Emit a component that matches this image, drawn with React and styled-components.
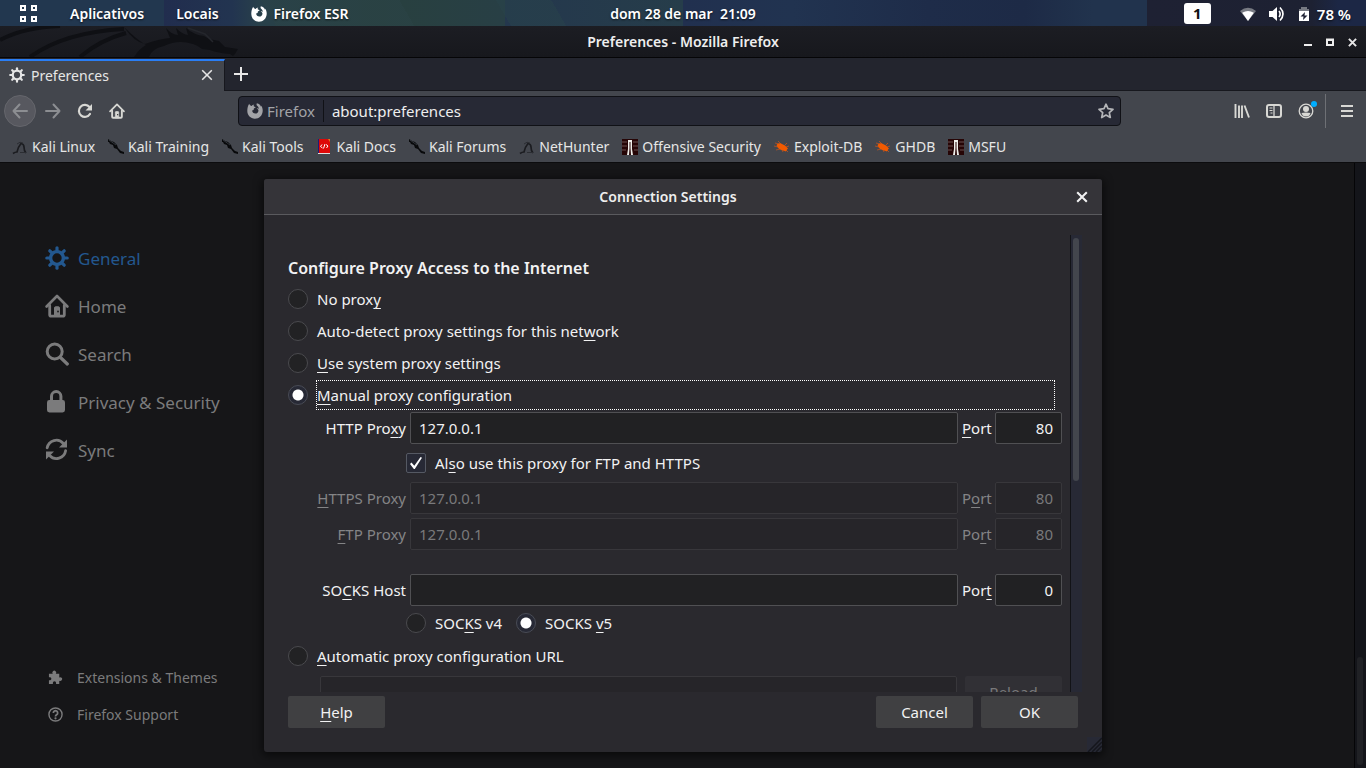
import React from 'react';
import styled, { createGlobalStyle, css } from 'styled-components';

const GlobalStyle = createGlobalStyle`
  *, *::before, *::after { box-sizing: border-box; }
  body { margin: 0; background: #161618; }
  body, button, input { font-family: "Noto Sans", "Open Sans", sans-serif; font-size: 15px; }
  button { padding: 0; border: 0; background: none; color: inherit; }
  a { color: inherit; text-decoration: none; }
  svg { display: block; flex: none; }
`;

const Desktop = styled.div`
  display: flex;
  flex-direction: column;
  height: 100vh;
  overflow: hidden;
  color: #e6e6e6;
`;

/* ---- desktop panel ---- */
const Panel = styled.header`
  display: grid;
  grid-template-columns: 1fr auto 1fr;
  align-items: center;
  flex: none;
  height: 26px;
  padding-top: 1px;
  color: #fff;
  font-size: 14px;
  font-weight: 600;
  text-shadow: 0 1px 2px #000a;
  background:
    linear-gradient(90deg, transparent 84%, #1e2133 84%, #1d2132 96%, #1c2745 98%),
    linear-gradient(60deg, transparent 37%, #28434a80 37%, #28434a80 41%, transparent 41%),
    linear-gradient(60deg, transparent 20%, #2b434780 20%, #2b434780 30%, transparent 30%),
    linear-gradient(90deg, #22374f 0%, #22374f 12%, #212d4e 12%, #223450 17%, #28404a 19%, #28403f 28%, #283f45 37%, #24374d 37%, #263d4a 50%, #21304f 50%, #213350 58%, #1e2c49 68%, #1d2a46 75%, #21334d 80%);
`;

const PanelGroup = styled.div`
  display: flex;
  align-items: center;
  justify-content: ${(p) => (p.$end ? 'flex-end' : 'flex-start')};
  gap: ${(p) => (p.$end ? 13 : 32)}px;
  padding: ${(p) => (p.$end ? '0 15px 0 0' : '0 0 0 20px')};
`;

const PanelButton = styled.button`
  display: flex;
  align-items: center;
  gap: 7px;
  font-size: ${(p) => (p.$large ? 15 : 14)}px;
  font-weight: 600;
  line-height: 20px;
  text-shadow: inherit;
  white-space: pre;
`;

const Workspace = styled.button`
  width: 27px;
  height: 21px;
  margin-right: 16px;
  border-radius: 3px;
  background: #fff;
  color: #111;
  font-size: 15px;
  font-weight: 700;
  line-height: 21px;
`;

/* ---- window chrome ---- */
const TitleBar = styled.div`
  position: relative;
  display: grid;
  grid-template-columns: 1fr auto 1fr;
  align-items: center;
  flex: none;
  height: 32px;
  padding-top: 1px;
  border-bottom: 1px solid #050507;
  background: linear-gradient(#1c1d23, #17181d);
`;

const TitleText = styled.h1`
  margin: 0;
  font-size: 14px;
  font-weight: 600;
  line-height: 20px;
  color: #eee;
`;

const WindowButtons = styled.div`
  display: flex;
  justify-content: flex-end;
  gap: 6px;
  padding-right: 6px;
  button { display: grid; place-items: center; width: 16px; height: 20px; }
`;

const TabStrip = styled.div`
  display: flex;
  flex: none;
  height: 33px;
  border-bottom: 1px solid #17181e;
  background: #23252e;
`;

const Tab = styled.div`
  display: flex;
  align-items: center;
  gap: 6px;
  width: 225px;
  height: 32px;
  margin-top: 1px;
  padding: 0 11px 2px 9px;
  border-top: 2px solid #2a7ef5;
  border-right: 1px solid #17181e;
  background: #43464d;
  font-size: 14px;
  span { flex: 1; }
`;

const NewTab = styled.button`
  display: grid;
  place-items: center;
  width: 32px;
`;

const NavBar = styled.nav`
  display: flex;
  align-items: center;
  flex: none;
  height: 40px;
  padding: 0 3px 0 4px;
  background: #43464d;
`;

const NavButton = styled.button`
  position: relative;
  display: grid;
  place-items: center;
  flex: none;
  width: 32px;
  height: 32px;
  border-radius: 50%;
  color: ${(p) => (p.$dim ? '#8c8e92' : '#d8d8d4')};
  ${(p) => p.$round && css`
    margin-right: 1px;
    background: #57585f;
    border: 1px solid #65666c;
  `}
`;

const Separator = styled.span`
  width: 1px;
  height: 34px;
  margin: 0 5px 0 3px;
  background: #6e7075;
`;

const Badge = styled.span`
  position: absolute;
  top: 6px;
  right: 5px;
  width: 6px;
  height: 6px;
  border-radius: 50%;
  background: #00aeff;
`;

const UrlBar = styled.div`
  display: flex;
  align-items: center;
  flex: 1;
  height: 30px;
  margin: 0 105px;
  padding: 0 6px 0 8px;
  border: 1px solid #101116;
  border-radius: 4px;
  background: #272935;
`;

const Identity = styled.span`
  display: flex;
  align-items: center;
  gap: 4px;
  height: 22px;
  padding-right: 8px;
  border-right: 1px solid #101116;
  color: #a2a3a7;
`;

const UrlInput = styled.input`
  flex: 1;
  min-width: 0;
  padding: 0 8px;
  border: 0;
  outline: 0;
  background: none;
  color: #eee;
`;

const Bookmarks = styled.div`
  display: flex;
  align-items: center;
  gap: 13px;
  flex: none;
  height: 32px;
  padding-left: 12px;
  border-bottom: 1px solid #0c0c0e;
  background: #43464d;
`;

const Bookmark = styled.a`
  display: flex;
  align-items: center;
  gap: 4px;
  font-size: 14px;
  line-height: 20px;
  white-space: nowrap;
`;

/* ---- preferences page ---- */
const Page = styled.main`
  position: relative;
  display: flex;
  flex: 1;
  min-height: 0;
  background: #161618;
`;

const Sidebar = styled.aside`
  display: flex;
  flex-direction: column;
  justify-content: space-between;
  flex: 1;
  padding: 71px 0 35px 45px;
  color: #7b7b7c;
`;

const SideList = styled.nav`
  display: flex;
  flex-direction: column;
`;

const SideLink = styled.a`
  display: flex;
  align-items: center;
  gap: 9px;
  height: 48px;
  font-size: 17px;
  color: ${(p) => (p.$active ? '#23588f' : 'inherit')};
`;

const SideFooterLink = styled.a`
  display: flex;
  align-items: center;
  gap: 14px;
  height: 37px;
  padding-left: 3px;
  font-size: 14px;
`;

const PageScroll = styled.div`
  display: flex;
  flex-direction: column;
  justify-content: flex-end;
  width: 12px;
  padding: 0 2px 3px;
  border-left: 1px solid #050507;
  background: #14151a;
`;

const PageThumb = styled.div`
  width: 6px;
  height: 108px;
  border-radius: 3px;
  background: #202125;
`;

const Overlay = styled.div`
  position: absolute;
  inset: 0;
  display: flex;
  justify-content: center;
  padding: 16px;
`;

const Dialog = styled.section`
  display: flex;
  flex-direction: column;
  width: 838px;
  max-width: 100%;
  border-radius: 3px;
  overflow: hidden;
  position: relative;
  background: #2a292e;
  box-shadow: 0 2px 8px 2px #0008;
  color: #f2f2f3;
`;

const DialogHeader = styled.header`
  display: grid;
  grid-template-columns: 10px 1fr 40px;
  align-items: center;
  flex: none;
  height: 36px;
  border-bottom: 1px solid #5a5a5e;
  background: #353439;
  text-align: center;
  button { display: grid; place-items: center; height: 35px; }
`;

const DialogBody = styled.form`
  display: flex;
  flex-direction: column;
  gap: 4px;
  flex: 1;
  min-height: 0;
  padding: 20px 20px 24px 24px;
`;

const ScrollArea = styled.div`
  display: flex;
  flex: 1;
  min-height: 0;
`;

const Settings = styled.div`
  flex: 1;
  padding: 18px 8px 0 0;
  overflow: hidden;
`;

const Track = styled.div`
  width: 12px;
  padding: 3px 2px;
  border-left: 1px solid #121317;
  background: #272935;
`;

const Thumb = styled.div`
  width: 6px;
  height: 243px;
  border-radius: 3px;
  background: #43464d;
`;

const SectionTitle = styled.h2`
  margin: 0;
  font-size: 16px;
  font-weight: 600;
  line-height: 30px;
`;

const Mnemonic = styled.u`
  text-decoration-thickness: 1px;
  text-underline-offset: 3px;
`;

const Choice = styled.div`
  display: flex;
  align-items: center;
  height: 32px;
`;

const ChoiceLabel = styled.label`
  height: 30px;
  border: 1px dotted ${(p) => (p.$focused ? '#fff' : 'transparent')};
  line-height: 28px;
  margin: 0 7px 0 8px;
  ${(p) => p.$wide && 'flex: 1;'}
`;

const Radio = styled.input.attrs({ type: 'radio' })`
  appearance: none;
  width: 20px;
  height: 20px;
  margin: 0;
  border: 1px solid #4a4a4e;
  border-radius: 50%;
  background: #222224;
  &:checked {
    border-color: #484b55;
    background: radial-gradient(circle, #fff 5px, #272935 6px);
  }
`;

const Checkbox = styled.input.attrs({ type: 'checkbox' })`
  appearance: none;
  display: grid;
  place-items: center;
  width: 20px;
  height: 20px;
  margin: 0;
  border: 1px solid #555963;
  border-radius: 2px;
  background: #272935;
  &:checked::before {
    content: '';
    width: 12px;
    height: 12px;
    background: #fff;
    clip-path: polygon(0 58%, 12% 46%, 36% 72%, 88% 0, 100% 6%, 40% 100%, 32% 100%);
  }
`;

const Indented = styled.div`
  display: flex;
  align-items: center;
  height: ${(p) => (p.$tall ? 38 : 34)}px;
  padding-left: 118px;
  label { margin-right: 13px; }
`;

const ProxyRow = styled.div`
  display: grid;
  grid-template-columns: 118px 1fr 29px 67px;
  align-items: center;
  gap: 4px;
  margin-top: ${(p) => p.$gap}px;
  color: ${(p) => (p.$off ? '#848486' : 'inherit')};
  label { white-space: nowrap; }
  label:first-child { text-align: right; }
`;

const Field = styled.input`
  min-width: 0;
  width: 100%;
  height: 32px;
  padding: 0 8px;
  border: 1px solid #505053;
  border-radius: 2px;
  background: #212123;
  color: #f2f2f3;
  text-align: ${(p) => (p.$right ? 'right' : 'left')};
  &:disabled {
    border-color: #38373b;
    background: #262529;
    color: #79797b;
  }
`;

const AutoRow = styled.div`
  display: flex;
  gap: 8px;
  margin-top: 4px;
  padding-left: 32px;
`;

const Button = styled.button`
  flex: none;
  width: 97px;
  height: 32px;
  border-radius: 2px;
  background: #404042;
  color: #f2f2f3;
  &:disabled { background: #313035; color: #79797b; }
`;

const Actions = styled.footer`
  display: flex;
  gap: 8px;
  padding-right: 4px;
  button:first-child { margin-right: auto; }
`;

const Grip = styled.svg`
  position: absolute;
  right: 0;
  bottom: 0;
`;

/* ---- drawings ---- */
const Gear = ({ size }) => (
  <svg width={size} height={size} viewBox="0 0 24 24" fill="none" stroke="currentColor">
    <circle cx="12" cy="12" r="6.4" strokeWidth="3.4" />
    {[0, 45, 90, 135, 180, 225, 270, 315].map((a) => (
      <path key={a} d="M12 4.5V1.8" strokeWidth="3.2" strokeLinecap="round" transform={`rotate(${a} 12 12)`} />
    ))}
  </svg>
);

const House = ({ size }) => (
  <svg width={size} height={size} viewBox="0 0 24 24" fill="none" stroke="currentColor" strokeLinecap="round" strokeLinejoin="round">
    <path d="M1.6 12.5 12 2l10.4 10.5" strokeWidth="2.6" />
    <path d="M4.7 11.5v9.3q0 1.4 1.4 1.4h11.8q1.4 0 1.4-1.4v-9.3" strokeWidth="2.8" />
    <path d="M9.500 22v-8.2q0-1 1-1h3q1 0 1 1V22z" strokeWidth="1" fill="currentColor" />
    <circle cx="13" cy="17.500" r="1" fill="#222" stroke="none" />
  </svg>
);

const Magnifier = () => (
  <svg width="24" height="24" viewBox="0 0 24 24" fill="none" stroke="currentColor" strokeLinecap="round">
    <circle cx="9.7" cy="9.5" r="7.5" strokeWidth="3" />
    <path d="M15.5 15.5 22.3 22" strokeWidth="3.2" />
  </svg>
);

const Padlock = () => (
  <svg width="24" height="24" viewBox="0 0 24 24" fill="none" stroke="currentColor">
    <path d="M6.5 12V6.3a4.7 4.7 0 0 1 9.4 0V12" strokeWidth="3" />
    <rect x="2" y="10" width="18" height="12.5" rx="2.4" fill="currentColor" stroke="none" />
  </svg>
);

const SyncIcon = () => (
  <svg width="24" height="24" viewBox="0 0 24 24" fill="none" stroke="currentColor">
    <path d="M2.200 9.800A9.300 9.300 0 0 1 18.400 5.500M20.600 12.700A9.300 9.300 0 0 1 4.600 17.500" strokeWidth="2.8" strokeLinecap="round" />
    <path d="M22 1.500v8h-8zM1 21.500v-8h8z" fill="currentColor" stroke="none" />
  </svg>
);

const Puzzle = () => (
  <svg width="15" height="15" viewBox="0 0 16 16" fill="currentColor">
    <path d="M1 4h4.2a2 2 0 1 1 3 0H12v4a2 2 0 1 1 0 3.400V15H8.600v-1.300a1.700 1.700 0 0 0-3.400 0V15H1v-4h1.300a1.700 1.700 0 0 0 0-3.300H1z" />
  </svg>
);

const Question = () => (
  <svg width="15" height="15" viewBox="0 0 16 16" fill="none" stroke="currentColor">
    <circle cx="8" cy="8" r="7" strokeWidth="1.500" />
    <path d="M5.700 6.300a2.300 2.300 0 1 1 3.500 2Q8 9 8 10" strokeWidth="1.900" />
    <circle cx="8" cy="12" r="1.200" fill="currentColor" stroke="none" />
  </svg>
);

const FirefoxMark = () => (
  <svg width="16" height="16" viewBox="0 0 16 16" fill="currentColor">
    <path d="M2.200.800c.600 1.500 1.300 2 2.500 2.100C5.500 2 6.200 1.600 7.200 1.500c-.6.7-.7 1.500-.2 2.100l1.800.6-1.900 1.300-.3 1.400-1.500.6c.2 1.900 1.500 3 3.200 3 2 0 3.300-1.500 3.100-3.200-.1-1-.8-1.600-1.700-1.900 1-.3 1.700 0 2.200.5-.3-2-1.500-2.800-2.400-3.900L9.800.300c2.400.6 3.600 1.900 4.200 3.400l.3-1c1 1.500 1.500 3.200 1.400 5.300-.2 4.500-3.500 7.700-7.800 7.700S.3 12.500.3 8.100c0-2.900.6-5.500 1.900-7.300z" />
  </svg>
);

const Cross = ({ size, weight }) => (
  <svg width={size} height={size} viewBox="0 0 10 10" stroke="currentColor" strokeWidth={weight}>
    <path d="M1 1l8 8M9 1l-8 8" />
  </svg>
);

const AppGrid = () => (
  <svg width="18" height="18" viewBox="0 0 18 18" fill="none" stroke="#fff" strokeWidth="2">
    <path d="M1 1h4v4H1zM12 1h4v4h-4zM1 12h4v4H1zM12 12h4v4h-4z" />
  </svg>
);

const Wifi = () => (
  <svg width="16" height="16" viewBox="0 0 16 16">
    <path d="M0 5Q8-1.500 16 5l-8 10z" fill="#777a82" />
    <path d="M2.200 6.800Q8 3 13.800 6.800L8 15z" fill="#fff" />
  </svg>
);

const Speaker = () => (
  <svg width="16" height="16" viewBox="0 0 16 16" fill="none" stroke="#fff" strokeWidth="1.600">
    <path d="M0 5h3.500L8 1v14L3.500 11H0z" fill="#fff" stroke="none" />
    <path d="M10 5q2.300 3 0 6M11 1.500q6 6.500 0 13" />
  </svg>
);

const Battery = () => (
  <svg width="12" height="16" viewBox="0 0 12 16">
    <path d="M3 1h6v2h2v3H1V3h2z" fill="#777a82" />
    <path d="M1 5h10v10H1z" fill="#fff" />
    <path d="M7 6 2.500 10.500H5.500L5 14 9.500 9.500h-3z" fill="#1d2132" />
  </svg>
);

const Dragon = styled.svg`
  position: absolute;
  left: 0;
  top: 0;
`;

const TitleDragon = () => (
  <Dragon width="245" height="31" viewBox="0 0 245 31" fill="none" stroke="#0f1014">
    <path d="M0 14Q25 1 60 0M30 31Q65 6 124 3M80 31Q100 14 126 7" strokeWidth="4" />
    <path d="M124 1q10 15 21 17 14-5 25-6l-4-10q6 7 12 7l-2-7q7 7 12 7l-2-7q8 7 18 8l5 3 10 2 6 6 13 2-3 5-2 2-3-2q-12-1-20-4l-8-1q-5-4-9-5-15-5-29 2-13 3-15 11h-15q6-9 12-12-10-6-22-18z" fill="#0f1014" stroke="none" />
    <path d="M188 2l17 6 8 8" strokeWidth="1.500" stroke="#24262c" />
  </Dragon>
);

const SiteIcon = ({ kind }) => {
  if (kind === 'linux') {
    return (
      <svg width="16" height="16" viewBox="0 0 16 16" fill="none" stroke="#1b1c20">
        <path d="M1 14.500q2-1.500 4-1.500Q6 8 9 4.500q3 .5 3 3.500 0 4 2 6" strokeWidth="1.700" />
        <path d="M5 5q3-3 6-1M8 13.500h6" stroke="#2b2d32" />
      </svg>
    );
  }
  if (kind === 'kali') {
    return (
      <svg width="16" height="16" viewBox="0 0 16 16" fill="#08090b">
        <path d="M0 0l3 2 3 1 3 3 1 3 3 3 3 1v2l-4-1-3-4-3-1-1-3-3-1-1-2H0z" />
        <path d="M1 1l7 5" stroke="#30343a" fill="none" />
      </svg>
    );
  }
  if (kind === 'docs') {
    return (
      <svg width="16" height="16" viewBox="0 0 16 16">
        <path d="M2 0h12v14H2z" fill="#dd0808" />
        <path d="M2 0h1v14H2z" fill="#231a77" />
        <path d="M12 0h2v3z" fill="#d87a20" />
        <path d="M2 14h12v1H2z" fill="#ddd" />
        <path d="M6 5.500 4.500 7.500 6.500 9M9 5 7.500 9.500M10 5.500l2 1.500-1.500 2" stroke="#fff" fill="none" />
      </svg>
    );
  }
  if (kind === 'offsec') {
    return (
      <svg width="16" height="16" viewBox="0 0 16 16">
        <path d="M0 0h16v16H0z" fill="#260506" />
        <path d="M0 3h5M11 3h5M0 7h5M11 7h5M0 11h4M12 11h4" stroke="#69504e" />
        <path d="M5 16l1-6V1h4v9l1 6H9L8.500 9V3h-1v6L7 16z" fill="#efeeea" />
      </svg>
    );
  }
  return (
    <svg width="16" height="16" viewBox="0 0 16 16">
      <path d="M1 4l4 1M0 7l4 1M2 11l4-1M4 2l3 3M12 8l3-1M11 10l3 3M8 11l1 2M11 6l2-2" stroke="#a4502a" />
      <path d="M2.500 6Q4 3.500 7 4.500l4 2 3 3-1 1-1 2-3-1Q4 10.500 2.500 6z" fill="#f15a00" />
    </svg>
  );
};

const BOOKMARKS = [
  ['linux', 'Kali Linux'],
  ['kali', 'Kali Training'],
  ['kali', 'Kali Tools'],
  ['docs', 'Kali Docs'],
  ['kali', 'Kali Forums'],
  ['linux', 'NetHunter'],
  ['offsec', 'Offensive Security'],
  ['bug', 'Exploit-DB'],
  ['bug', 'GHDB'],
  ['offsec', 'MSFU'],
];

const CATEGORIES = [
  ['General', <Gear size={24} />],
  ['Home', <House size={24} />],
  ['Search', <Magnifier />],
  ['Privacy & Security', <Padlock />],
  ['Sync', <SyncIcon />],
];

/* Label text whose access key, marked by an underscore before it, is underlined. */
const Keyed = ({ text }) => {
  const at = text.indexOf('_');
  return (
    <>
      {text.slice(0, at)}
      <Mnemonic>{text[at + 1]}</Mnemonic>
      {text.slice(at + 2)}
    </>
  );
};

const ProxyChoice = ({ id, text, checked, focused }) => (
  <Choice>
    <Radio id={id} name="proxy" defaultChecked={checked} />
    <ChoiceLabel htmlFor={id} $wide $focused={focused}><Keyed text={text} /></ChoiceLabel>
  </Choice>
);

const ProxyHost = ({ id, label, portLabel, host, port, disabled, gap }) => (
  <ProxyRow $off={disabled} $gap={gap}>
    <label htmlFor={id}><Keyed text={label} /></label>
    <Field id={id} defaultValue={host} disabled={disabled} />
    <label htmlFor={`${id}-port`}><Keyed text={portLabel} /></label>
    <Field id={`${id}-port`} defaultValue={port} disabled={disabled} $right />
  </ProxyRow>
);

export default function App() {
  return (
    <Desktop>
      <GlobalStyle />
      <Panel>
        <PanelGroup>
          <PanelButton aria-label="Overview"><AppGrid /></PanelButton>
          <PanelButton>Aplicativos</PanelButton>
          <PanelButton>Locais</PanelButton>
          <PanelButton><FirefoxMark />Firefox ESR</PanelButton>
        </PanelGroup>
        <PanelButton>dom 28 de mar  21:09</PanelButton>
        <PanelGroup $end>
          <Workspace>1</Workspace>
          <Wifi />
          <Speaker />
          <PanelButton $large><Battery />78 %</PanelButton>
        </PanelGroup>
      </Panel>

      <TitleBar>
        <TitleDragon />
        <span />
        <TitleText>Preferences - Mozilla Firefox</TitleText>
        <WindowButtons>
          <button aria-label="Minimize">
            <svg width="8" height="8" viewBox="0 0 8 8"><path d="M0 6h8v2H0z" fill="#eee" /></svg>
          </button>
          <button aria-label="Maximize">
            <svg width="8" height="8" viewBox="0 0 8 8" fill="none" stroke="#eee"><path d="M1 1.500h6v5.500H1z" strokeWidth="2" /><path d="M0 2h8" strokeWidth="2" /></svg>
          </button>
          <button aria-label="Close"><Cross size={9} weight={2.2} /></button>
        </WindowButtons>
      </TitleBar>

      <TabStrip>
        <Tab>
          <Gear size={16} />
          <span>Preferences</span>
          <button aria-label="Close tab"><Cross size={12} weight={1.3} /></button>
        </Tab>
        <NewTab aria-label="New tab">
          <svg width="14" height="14" viewBox="0 0 14 14" stroke="#e8e8e8" strokeWidth="2"><path d="M7 0v14M0 7h14" /></svg>
        </NewTab>
      </TabStrip>

      <NavBar>
        <NavButton $round $dim aria-label="Back">
          <svg width="16" height="16" viewBox="0 0 16 16" fill="none" stroke="currentColor" strokeWidth="2" strokeLinecap="round" strokeLinejoin="round"><path d="M15 8H1.500M7.500 1.500 1.500 8l6 6.500" /></svg>
        </NavButton>
        <NavButton $dim aria-label="Forward">
          <svg width="16" height="16" viewBox="0 0 16 16" fill="none" stroke="currentColor" strokeWidth="2" strokeLinecap="round" strokeLinejoin="round"><path d="M1 8h13.500M8.500 1.500l6 6.500-6 6.500" /></svg>
        </NavButton>
        <NavButton aria-label="Reload page">
          <svg width="16" height="16" viewBox="0 0 16 16" fill="none" stroke="currentColor" strokeWidth="2.200"><path d="M12.500 4A6 6 0 1 0 13 11" strokeLinecap="round" /><path d="M15 1v6.500H8.500z" fill="currentColor" stroke="none" /></svg>
        </NavButton>
        <NavButton aria-label="Home page"><House size={16} /></NavButton>
        <UrlBar>
          <Identity><FirefoxMark />Firefox</Identity>
          <UrlInput aria-label="Address" defaultValue="about:preferences" />
          <svg width="16" height="16" viewBox="0 0 16 16" fill="none" stroke="#b4b5b8" strokeWidth="1.700" strokeLinejoin="round"><path d="M8 1.200l2 4.500 5 .6-3.700 3.300 1 4.900L8 12l-4.300 2.500 1-4.900L1 6.300l5-.6z" /></svg>
        </UrlBar>
        <NavButton aria-label="Library">
          <svg width="16" height="16" viewBox="0 0 16 16" fill="none" stroke="currentColor" strokeWidth="1.900"><path d="M1.500 1v14M5 2.500V15M8 2.500V15M10.500 2.500 15 14.500" /></svg>
        </NavButton>
        <NavButton aria-label="Sidebars">
          <svg width="16" height="16" viewBox="0 0 16 16" fill="none" stroke="currentColor"><rect x="1" y="2" width="14" height="12" rx="2" strokeWidth="2" /><path d="M8 2v12" strokeWidth="1.300" /><path d="M3.500 5h3M3.500 7.500h3M4.500 10h2" /></svg>
        </NavButton>
        <NavButton aria-label="Account">
          <svg width="16" height="16" viewBox="0 0 16 16" fill="currentColor"><circle cx="8" cy="8" r="6.800" fill="none" stroke="currentColor" strokeWidth="1.300" /><circle cx="8" cy="6" r="3" /><path d="M3.500 10q4.500-1 9 0-1 3.500-4.500 3.500T3.500 10z" /></svg>
          <Badge />
        </NavButton>
        <Separator />
        <NavButton aria-label="Menu">
          <svg width="14" height="14" viewBox="0 0 14 14" stroke="currentColor" strokeWidth="2"><path d="M1 2h12M1 7h12M1 12h12" /></svg>
        </NavButton>
      </NavBar>

      <Bookmarks>
        {BOOKMARKS.map(([kind, name]) => (
          <Bookmark key={name} href="#"><SiteIcon kind={kind} />{name}</Bookmark>
        ))}
      </Bookmarks>

      <Page>
        <Sidebar>
          <SideList>
            {CATEGORIES.map(([name, icon], i) => (
              <SideLink key={name} href="#" $active={i === 0}>{icon}{name}</SideLink>
            ))}
          </SideList>
          <SideList>
            <SideFooterLink href="#"><Puzzle />Extensions &amp; Themes</SideFooterLink>
            <SideFooterLink href="#"><Question />Firefox Support</SideFooterLink>
          </SideList>
        </Sidebar>
        <PageScroll><PageThumb /></PageScroll>

        <Overlay>
          <Dialog role="dialog" aria-label="Connection Settings">
            <DialogHeader>
              <span />
              <TitleText as="h2">Connection Settings</TitleText>
              <button aria-label="Close dialog"><Cross size={12} weight={1.7} /></button>
            </DialogHeader>
            <DialogBody onSubmit={(e) => e.preventDefault()}>
              <ScrollArea>
                <Settings>
                  <SectionTitle>Configure Proxy Access to the Internet</SectionTitle>
                  <ProxyChoice id="none" text="No prox_y" />
                  <ProxyChoice id="detect" text="Auto-detect proxy settings for this net_work" />
                  <ProxyChoice id="system" text="_Use system proxy settings" />
                  <ProxyChoice id="manual" text="_Manual proxy configuration" checked focused />
                  <ProxyHost id="http" label="HTTP Pro_xy" portLabel="_Port" host="127.0.0.1" port="80" gap={1} />
                  <Indented $tall>
                    <Checkbox id="share" defaultChecked />
                    <ChoiceLabel htmlFor="share"><Keyed text="Al_so use this proxy for FTP and HTTPS" /></ChoiceLabel>
                  </Indented>
                  <ProxyHost id="https" label="_HTTPS Proxy" portLabel="P_ort" host="127.0.0.1" port="80" gap={0} disabled />
                  <ProxyHost id="ftp" label="_FTP Proxy" portLabel="Po_rt" host="127.0.0.1" port="80" gap={4} disabled />
                  <ProxyHost id="socks" label="SO_CKS Host" portLabel="Por_t" host="" port="0" gap={24} />
                  <Indented>
                    <Radio id="v4" name="socks" />
                    <ChoiceLabel htmlFor="v4"><Keyed text="SOC_KS v4" /></ChoiceLabel>
                    <Radio id="v5" name="socks" defaultChecked />
                    <ChoiceLabel htmlFor="v5"><Keyed text="SOCKS _v5" /></ChoiceLabel>
                  </Indented>
                  <ProxyChoice id="auto" text="_Automatic proxy configuration URL" />
                  <AutoRow>
                    <Field aria-label="Automatic proxy configuration URL" disabled />
                    <Button type="button" disabled>Reload</Button>
                  </AutoRow>
                </Settings>
                <Track><Thumb /></Track>
              </ScrollArea>
              <Actions>
                <Button type="button"><Keyed text="_Help" /></Button>
                <Button type="button">Cancel</Button>
                <Button type="submit">OK</Button>
              </Actions>
            </DialogBody>
            <Grip width="15" height="15" viewBox="0 0 15 15" stroke="#15161c" strokeWidth="1.500">
              <path d="M0 0h15v15H0z" fill="#272935" stroke="none" />
              <path d="M1 15 15 1M5 15 15 5M9 15l6-6M13 15l2-2" />
            </Grip>
          </Dialog>
        </Overlay>
      </Page>
    </Desktop>
  );
}
